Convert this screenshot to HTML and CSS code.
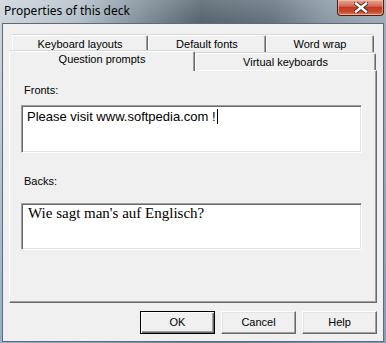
FILE: index.html
```html
<!DOCTYPE html>
<html lang="en">
<head>
    <meta charset="UTF-8">
    <title>Properties of this deck</title>
    <link rel="stylesheet" href="styles.css">
</head>
<body>

<div class="window">
    <div class="titlebar">
        <span class="title">Properties of this deck</span>
        <div class="close-btn">
            <svg width="14" height="11" viewBox="0 0 14 11">
                <path d="M2 1.5 L12 9.5 M12 1.5 L2 9.5" stroke="#3a2a28" stroke-width="4.2" stroke-linecap="square"/>
                <path d="M2 1.5 L12 9.5 M12 1.5 L2 9.5" stroke="#ffffff" stroke-width="2.4" stroke-linecap="square"/>
            </svg>
        </div>
    </div>

    <div class="client">
        <div class="tabs">
            <div class="tab-row back-row">
                <div class="tab tab-keyboard">Keyboard layouts</div>
                <div class="tab tab-fonts">Default fonts</div>
                <div class="tab tab-wrap">Word wrap</div>
            </div>
            <div class="tab-row front-row">
                <div class="tab tab-prompts active">Question prompts</div>
                <div class="tab tab-virtual">Virtual keyboards</div>
            </div>
            <div class="panel">
                <div class="field-label">Fronts:</div>
                <div class="textbox textbox-sans">Please visit www.softpedia.com !<span class="caret"></span></div>
                <div class="field-label backs-label">Backs:</div>
                <div class="textbox textbox-serif">Wie sagt man's auf Englisch?</div>
            </div>
        </div>

        <div class="buttons">
            <div class="btn default">OK</div>
            <div class="btn">Cancel</div>
            <div class="btn">Help</div>
        </div>
    </div>
</div>

</body>
</html>
```

FILE: styles.css
```css
/* Global Styles */
body {
    margin: 0;
    padding: 0;
    font-family: 'Liberation Sans', Arial, sans-serif;
    font-size: 11px;
    color: #000;
}

/* Aero glass frame */
.window {
    width: 386px;
    height: 343px;
    display: flex;
    flex-direction: column;
    background:
        linear-gradient(to bottom, rgba(255, 255, 255, 0.15) 0, rgba(0, 0, 0, 0) 23px, rgba(110, 150, 190, 0.6) 100%),
        linear-gradient(to right, #cdd6dc 0%, #b3c0c9 20%, #7d8b96 38%, #56636e 52%, #64727e 70%, #8897a3 84%, #9eadb9 100%);
}

.titlebar {
    height: 23px;
    display: flex;
    align-items: flex-start;
    flex-shrink: 0;
}

.title {
    font-family: 'Noto Sans', 'Open Sans', sans-serif;
    font-size: 12px;
    line-height: 16px;
    padding: 3px 0 0 4px;
    color: #000;
}

.close-btn {
    margin-left: auto;
    margin-right: 2px;
    width: 45px;
    height: 15px;
    border: 1px solid #4a1e16;
    border-top: none;
    border-radius: 0 0 4px 4px;
    background: linear-gradient(to bottom, #e6a592 0%, #d56c54 40%, #c13c22 50%, #c84a2e 80%, #e0866a 100%);
    box-shadow: inset 0 0 0 1px rgba(255, 210, 190, 0.55);
    display: flex;
    justify-content: center;
    align-items: center;
}

.client {
    margin: 0 2px 1px 2px;
    height: 317px;
    background: #f0f0f0;
    border: 1px solid #5e6b76;
}

/* Tab control */
.tabs {
    margin: 11px 0 0 6px;
    width: 368px;
}

.tab-row {
    display: flex;
}

.back-row {
    height: 18px;
    padding-left: 3px;
}

.front-row {
    height: 19px;
    margin-top: -2px;
    align-items: flex-end;
}

.tab {
    box-sizing: border-box;
    background: #f0f0f0;
    border-top: 1px solid #fff;
    border-left: 1px solid #fff;
    border-right: 1px solid #696969;
    box-shadow: inset -1px 0 0 #a0a0a0, 0 -1px 0 #d6d6d6;
    border-radius: 2px 2px 0 0;
    text-align: center;
    line-height: 14px;
}

.back-row .tab {
    height: 18px;
    padding-top: 1px;
}

.tab-keyboard { width: 136px; }
.tab-fonts { width: 118px; }
.tab-wrap { width: 108px; }

.front-row .tab {
    height: 17px;
    padding-top: 1px;
    line-height: 15px;
}

.tab-prompts { width: 186px; }
.tab-virtual { width: 181px; }

.front-row .tab.active {
    height: 20px;
    padding-top: 0;
    margin-bottom: -1px;
    line-height: 15px;
    position: relative;
    z-index: 1;
}

.panel {
    box-sizing: border-box;
    height: 233px;
    border-top: 1px solid #fff;
    border-left: 1px solid #fff;
    border-right: 1px solid #696969;
    border-bottom: 1px solid #696969;
    box-shadow: inset -1px -1px 0 #a0a0a0;
    padding: 13px 0 0 11px;
}

.field-label {
    margin-left: 3px;
    line-height: 13px;
}

.backs-label {
    margin-top: 22px;
}

.textbox {
    box-sizing: border-box;
    width: 341px;
    margin-top: 8px;
    background: #fff;
    border-top: 1px solid #a0a0a0;
    border-left: 1px solid #a0a0a0;
    border-right: 1px solid #fff;
    border-bottom: 1px solid #fff;
    box-shadow: inset 1px 1px 0 #696969, inset -1px -1px 0 #e3e3e3;
}

.textbox-sans {
    height: 48px;
    padding: 3px 0 0 5px;
    font-family: 'Liberation Sans', Arial, sans-serif;
    font-size: 13px;
    line-height: 15px;
}

.caret {
    display: inline-block;
    width: 1px;
    height: 15px;
    margin-left: 1px;
    background: #000;
    vertical-align: -3px;
}

.textbox-serif {
    height: 47px;
    margin-top: 15px;
    padding: 1px 0 0 6px;
    font-family: 'Liberation Serif', 'Times New Roman', serif;
    font-size: 15px;
    line-height: 17px;
}

/* Dialog buttons */
.buttons {
    display: flex;
    justify-content: flex-end;
    gap: 6px;
    margin-top: 8px;
    padding-right: 6px;
}

.btn {
    box-sizing: border-box;
    width: 75px;
    height: 23px;
    background: #f0f0f0;
    border-top: 1px solid #fff;
    border-left: 1px solid #fff;
    border-right: 1px solid #696969;
    border-bottom: 1px solid #696969;
    box-shadow: inset -1px -1px 0 #a0a0a0, inset 1px 1px 0 #e3e3e3;
    text-align: center;
    line-height: 21px;
}

.btn.default {
    border: 1px solid #000;
    box-shadow: inset 1px 1px 0 #fff, inset -1px -1px 0 #696969, inset -2px -2px 0 #a0a0a0;
}
```
